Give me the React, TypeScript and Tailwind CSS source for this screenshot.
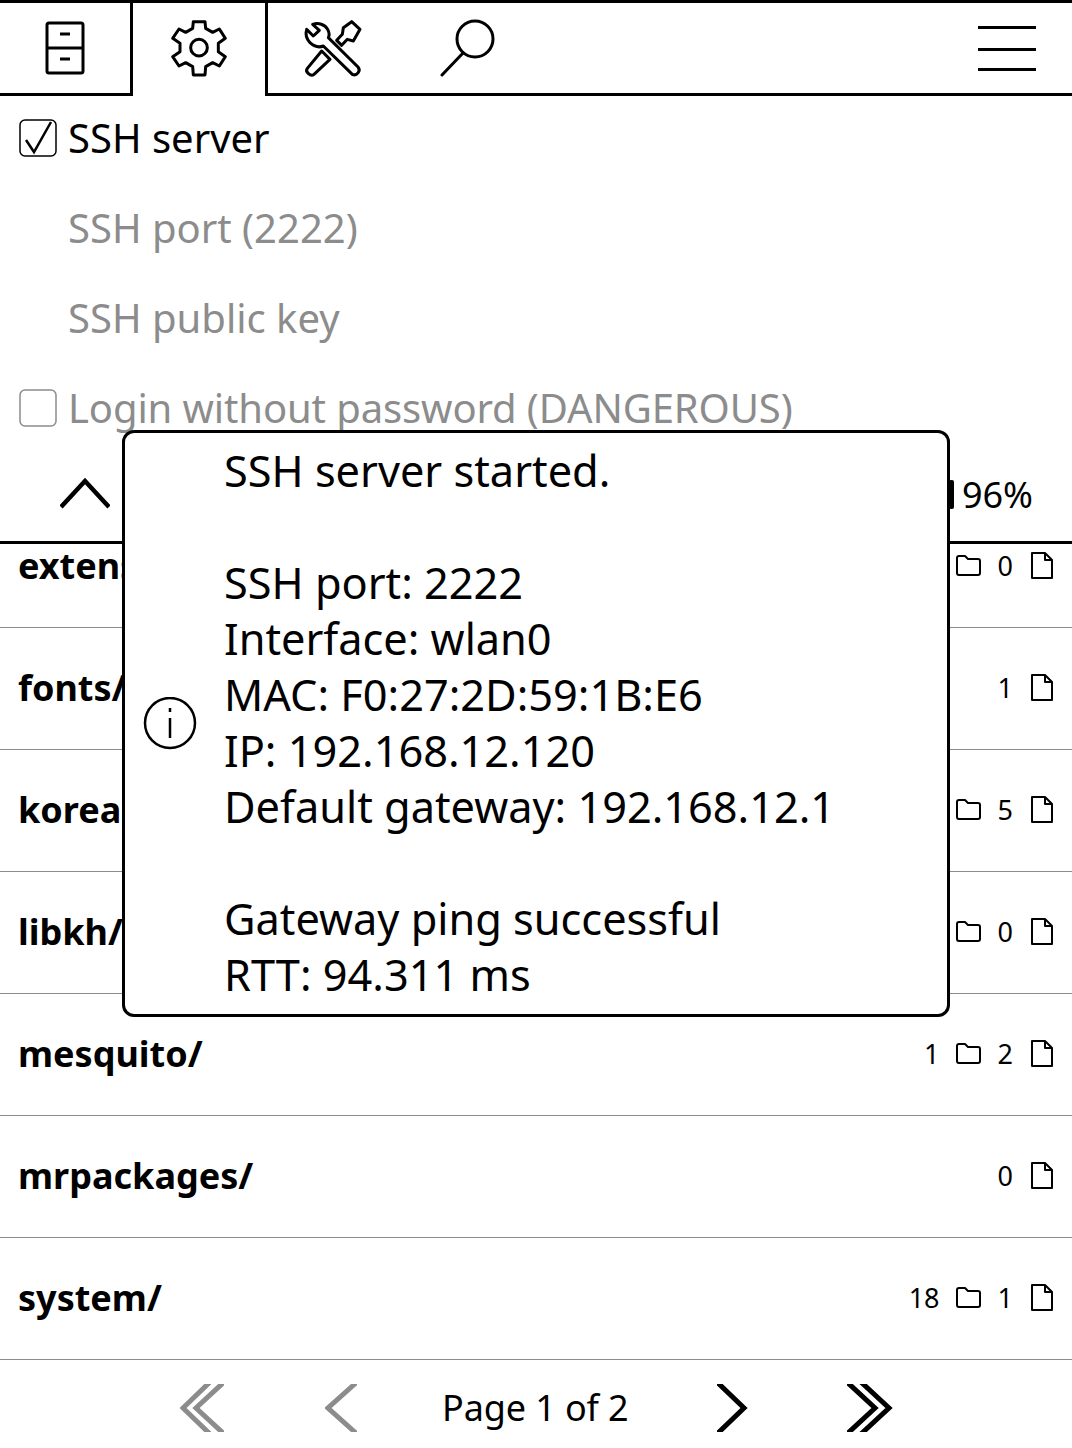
import React from "react";

const S = ({ className, w, h, children, sw = 3 }: { className?: string; w: number; h: number; sw?: number; children: React.ReactNode }) => (
  <svg className={className} width={w} height={h} viewBox={`0 0 ${w} ${h}`} fill="none" stroke="currentColor" strokeWidth={sw} strokeLinejoin="round">
    {children}
  </svg>
);

const Cabinet = () => (
  <S w={40} h={54} sw={3}>
    <rect x="2" y="2" width="36" height="50" rx="2" />
    <path d="M2 27h36M15 13h10M15 38h10" />
  </S>
);
const Gear = () => (
  <svg width="80" height="75" viewBox="0 0 240 225" fill="none" stroke="#000" strokeWidth="9" strokeLinejoin="round">
    <path d="M100 35L135 35L137 55L158 67L178 57L196 85L175 100L175 125L196 140L178 168L158 158L137 170L135 195L100 195L98 170L77 158L57 168L38 140L60 125L60 100L38 85L57 57L77 67L98 55Z" />
    <circle cx="117" cy="113" r="25" />
  </svg>
);
const Tools = () => (
  <svg width="80" height="75" viewBox="0 0 240 225" fill="none" stroke="#000" strokeWidth="9" strokeLinejoin="round">
    <path d="M68 40 C85 34 105 40 113 55 C118 64 119 72 115 80 L204 168 C214 180 200 196 187 190 L100 105 C88 110 72 106 60 95 C50 84 46 68 50 55 L70 75 L88 58 Z" />
    <path d="M160 50 L185 32 L210 55 L190 90 L172 85 L155 103 L140 88 L157 70 Z" />
    <path d="M95 120 L120 145 L72 190 C62 198 44 182 52 172 Z" />
  </svg>
);
const Search = () => (
  <S w={56} h={58} sw={3}>
    <circle cx="35" cy="20" r="18" />
    <path d="M23 34 L2 56" strokeLinecap="round" />
  </S>
);
const Folder = () => (
  <S w={25} h={22} sw={2}>
    <path d="M1 3 a2 2 0 0 1 2-2 h6 l3 3 h10 a2 2 0 0 1 2 2 v12 a2 2 0 0 1-2 2 h-19 a2 2 0 0 1-2-2 Z" />
  </S>
);
const FileI = () => (
  <S w={24} h={28} sw={2}>
    <path d="M2 1 h13 l7 7 v18 h-20 Z M15 1 v7 h7" />
  </S>
);
const Check = ({ on, gray }: { on?: boolean; gray?: boolean }) => (
  <svg width="38" height="38" viewBox="0 0 38 38" fill="none" className="shrink-0 overflow-visible">
    <rect x="1" y="1" width="36" height="36" rx="5" stroke={gray ? "#8c8c8c" : "#000"} strokeWidth="1.5" />
    {on && <path d="M7 21 L15 33 L32 3" stroke="#000" strokeWidth="2.5" />}
  </svg>
);

const rows: [string, string | null, string][] = [
  ["extensions/", "1", "0"],
  ["fonts/", null, "1"],
  ["koreader/", "2", "5"],
  ["libkh/", "3", "0"],
  ["mesquito/", "1", "2"],
  ["mrpackages/", null, "0"],
  ["system/", "18", "1"],
];

const Row = ({ name, d, f, first }: { name: string; d: string | null; f: string; first?: boolean }) => (
  <div className={`flex h-[122px] shrink-0 items-center justify-between border-b border-[#8c8c8c] pl-[18px] pr-[18px] ${first ? "-mt-[38px]" : ""}`}>
    <span className="pb-[2px] text-[36px] font-bold">{name}</span>
    <div className="flex items-center text-[27px]">
      {d !== null && (
        <>
          <span>{d}</span>
          <span className="ml-[16px] flex pb-[2px]"><Folder /></span>
        </>
      )}
      <span className="ml-[17px]">{f}</span>
      <span className="ml-[17px] flex pb-[2px]"><FileI /></span>
    </div>
  </div>
);

const Setting = ({ children, gray, check }: { children: React.ReactNode; gray?: boolean; check?: "on" | "off" }) => (
  <div className={`flex h-[90px] items-center text-[40px] ${gray ? "text-[#8c8c8c]" : "text-black"}`}>
    <div className="flex w-[68px] justify-start pl-[19px]">
      {check && <Check on={check === "on"} gray={gray} />}
    </div>
    {children}
  </div>
);

export default function App() {
  return (
    <div className="relative flex h-[1448px] w-[1072px] flex-col overflow-hidden bg-white text-black" style={{ fontFamily: '"Noto Sans", sans-serif' }}>
      <div className="relative z-10 flex h-[96px] shrink-0">
        <div className="flex w-[133px] items-center border-t-[3px] border-r-[3px] border-b-[3px] border-black pl-[45px]"><Cabinet /></div>
        <div className="flex w-[132px] items-center border-t-[3px] border-black pb-[4px] pl-[27px]"><Gear /></div>
        <div className="flex flex-1 items-center border-t-[3px] border-b-[3px] border-l-[3px] border-black pr-[36px]">
          <span className="ml-[22px] flex"><Tools /></span>
          <span className="ml-[70px] flex"><Search /></span>
          <div className="ml-auto flex w-[58px] flex-col">
            <div className="h-[3px] bg-black" />
            <div className="mt-[19px] h-[3px] bg-black" />
            <div className="mt-[17px] h-[3px] bg-black" />
          </div>
        </div>
      </div>

      <div className="-mt-[3px] h-[355px] shrink-0">
        <Setting check="on"><span>SSH server</span></Setting>
        <Setting gray><span>SSH port (2222)</span></Setting>
        <Setting gray><span>SSH public key</span></Setting>
        <Setting gray check="off"><span className="tracking-[-0.12px]">Login without password (DANGEROUS)</span></Setting>
      </div>

      <div className="flex h-[96px] shrink-0 items-center justify-between border-b-[3px] border-black pl-[60px] pr-[39px]">
        <svg className="-mt-[4px]" width="50" height="32" viewBox="0 0 50 32" fill="none" stroke="#000" strokeWidth="4.5"><path d="M1 30 L25 4 L49 30" /></svg>
        <div className="flex items-center text-[36px]">
          <div className="mr-[8px] h-[29px] w-[5px] rounded-[2px] bg-black" />
          <span>96%</span>
        </div>
      </div>

      <div className="h-[816px] shrink-0 overflow-hidden">
        {rows.map((r, i) => <Row key={r[0]} name={r[0]} d={r[1]} f={r[2]} first={i === 0} />)}
      </div>

      <div className="relative flex h-[72px] shrink-0 items-end">
        <div className="flex h-[48px] w-full items-center overflow-hidden pl-[180px]">
          <svg className="shrink-0" width="44" height="48" viewBox="0 0 44 48" fill="none" stroke="#8c8c8c" strokeWidth="5"><path d="M30 -2 L3 24 L30 50 M44 -2 L16 24 L44 50" /></svg>
          <svg className="ml-[101px] shrink-0" width="32" height="48" viewBox="0 0 32 48" fill="none" stroke="#8c8c8c" strokeWidth="5"><path d="M32 -2 L3 24 L32 50" /></svg>
          <span className="ml-[85px] w-[187px] whitespace-nowrap text-[36px] tracking-[-0.12px]">Page 1 of 2</span>
          <svg className="ml-[88px] shrink-0" width="32" height="48" viewBox="0 0 32 48" fill="none" stroke="#000" strokeWidth="5"><path d="M0 -2 L27 24 L0 50" /></svg>
          <svg className="ml-[98px] shrink-0" width="46" height="48" viewBox="0 0 46 48" fill="none" stroke="#000" strokeWidth="5"><path d="M0 -2 L28 24 L0 50 M14 -2 L42 24 L14 50" /></svg>
        </div>
      </div>

      <div className="absolute left-[122px] top-[430px] z-20 flex h-[587px] w-[828px] items-center rounded-[12px] border-[3px] border-black bg-white">
        <svg className="ml-[18px] shrink-0" width="54" height="54" viewBox="0 0 54 54" fill="none" stroke="#000" strokeWidth="2.5">
          <circle cx="27" cy="26" r="25" />
          <path d="M27 21v20M27 11v4" />
        </svg>
        <div className="ml-[27px] -mt-[1px] whitespace-pre text-[43.3px] leading-[56px]">
          {"SSH server started.\n\nSSH port: 2222\nInterface: wlan0\nMAC: F0:27:2D:59:1B:E6\nIP: 192.168.12.120\nDefault gateway: 192.168.12.1\n\nGateway ping successful\nRTT: 94.311 ms"}
        </div>
      </div>
    </div>
  );
}
